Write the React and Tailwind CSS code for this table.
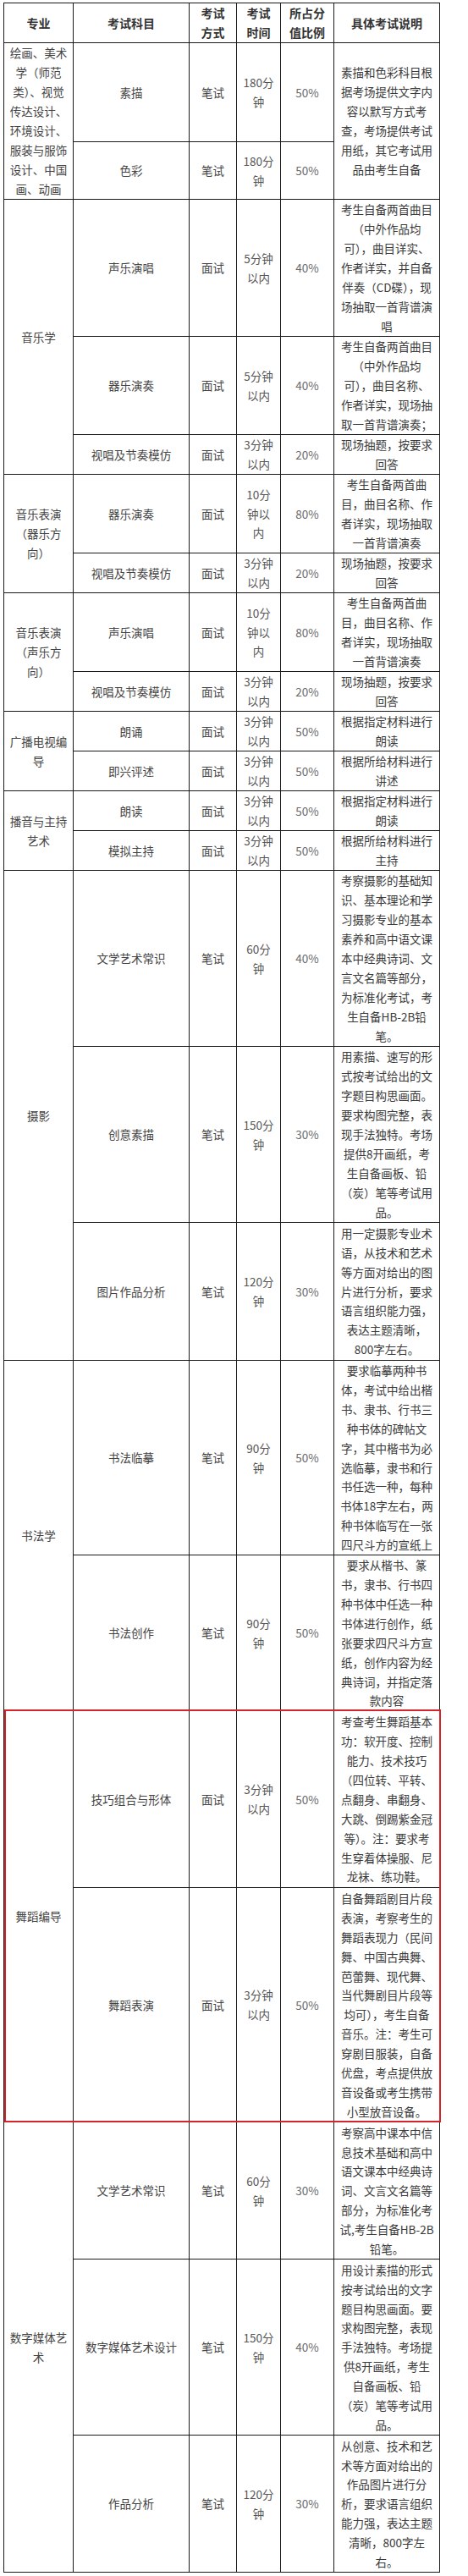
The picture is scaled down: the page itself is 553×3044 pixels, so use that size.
import React from "react";

const groups = [
  {
    major: ["绘画、美术", "学（师范", "类）、视觉", "传达设计、", "环境设计、", "服装与服饰", "设计、中国", "画、动画"],
    rows: [
      {
        h: "h-[117px]",
        subject: "素描",
        method: "笔试",
        time: ["180分", "钟"],
        pct: "50%",
        descSpan: 2,
        desc: ["素描和色彩科目根", "据考场提供文字内", "容以默写方式考", "查，考场提供考试", "用纸，其它考试用", "品由考生自备"],
      },
      { h: "h-[68px]", subject: "色彩", method: "笔试", time: ["180分", "钟"], pct: "50%" },
    ],
  },
  {
    major: ["音乐学"],
    rows: [
      {
        h: "h-[162px]",
        subject: "声乐演唱",
        method: "面试",
        time: ["5分钟", "以内"],
        pct: "40%",
        desc: ["考生自备两首曲目", "（中外作品均", "可），曲目详实、", "作者详实，并自备", "伴奏（CD碟），现", "场抽取一首背谱演", "唱"],
      },
      {
        h: "h-[116px]",
        subject: "器乐演奏",
        method: "面试",
        time: ["5分钟", "以内"],
        pct: "40%",
        desc: ["考生自备两首曲目", "（中外作品均", "可），曲目名称、", "作者详实，现场抽", "取一首背谱演奏；"],
      },
      {
        h: "h-[47px]",
        subject: "视唱及节奏模仿",
        method: "面试",
        time: ["3分钟", "以内"],
        pct: "20%",
        desc: ["现场抽题，按要求", "回答"],
      },
    ],
  },
  {
    major: ["音乐表演", "（器乐方", "向）"],
    rows: [
      {
        h: "h-[93px]",
        subject: "器乐演奏",
        method: "面试",
        time: ["10分", "钟以", "内"],
        pct: "80%",
        desc: ["考生自备两首曲", "目，曲目名称、作", "者详实，现场抽取", "一首背谱演奏"],
      },
      {
        h: "h-[47px]",
        subject: "视唱及节奏模仿",
        method: "面试",
        time: ["3分钟", "以内"],
        pct: "20%",
        desc: ["现场抽题，按要求", "回答"],
      },
    ],
  },
  {
    major: ["音乐表演", "（声乐方", "向）"],
    rows: [
      {
        h: "h-[93px]",
        subject: "声乐演唱",
        method: "面试",
        time: ["10分", "钟以", "内"],
        pct: "80%",
        desc: ["考生自备两首曲", "目，曲目名称、作", "者详实，现场抽取", "一首背谱演奏"],
      },
      {
        h: "h-[47px]",
        subject: "视唱及节奏模仿",
        method: "面试",
        time: ["3分钟", "以内"],
        pct: "20%",
        desc: ["现场抽题，按要求", "回答"],
      },
    ],
  },
  {
    major: ["广播电视编", "导"],
    rows: [
      { h: "h-[47px]", subject: "朗诵", method: "面试", time: ["3分钟", "以内"], pct: "50%", desc: ["根据指定材料进行", "朗读"] },
      { h: "h-[47px]", subject: "即兴评述", method: "面试", time: ["3分钟", "以内"], pct: "50%", desc: ["根据所给材料进行", "讲述"] },
    ],
  },
  {
    major: ["播音与主持", "艺术"],
    rows: [
      { h: "h-[47px]", subject: "朗读", method: "面试", time: ["3分钟", "以内"], pct: "50%", desc: ["根据指定材料进行", "朗读"] },
      { h: "h-[47px]", subject: "模拟主持", method: "面试", time: ["3分钟", "以内"], pct: "50%", desc: ["根据所给材料进行", "主持"] },
    ],
  },
  {
    major: ["摄影"],
    rows: [
      {
        h: "h-[208px]",
        subject: "文学艺术常识",
        method: "笔试",
        time: ["60分", "钟"],
        pct: "40%",
        desc: ["考察摄影的基础知", "识、基本理论和学", "习摄影专业的基本", "素养和高中语文课", "本中经典诗词、文", "言文名篇等部分，", "为标准化考试，考", "生自备HB-2B铅", "笔。"],
      },
      {
        h: "h-[208px]",
        subject: "创意素描",
        method: "笔试",
        time: ["150分", "钟"],
        pct: "30%",
        desc: ["用素描、速写的形", "式按考试给出的文", "字题目构思画面。", "要求构图完整，表", "现手法独特。考场", "提供8开画纸，考", "生自备画板、铅", "（炭）笔等考试用", "品。"],
      },
      {
        h: "h-[163px]",
        subject: "图片作品分析",
        method: "笔试",
        time: ["120分", "钟"],
        pct: "30%",
        desc: ["用一定摄影专业术", "语，从技术和艺术", "等方面对给出的图", "片进行分析，要求", "语言组织能力强，", "表达主题清晰，", "800字左右。"],
      },
    ],
  },
  {
    major: ["书法学"],
    rows: [
      {
        h: "h-[230px]",
        subject: "书法临摹",
        method: "笔试",
        time: ["90分", "钟"],
        pct: "50%",
        desc: ["要求临摹两种书", "体，考试中给出楷", "书、隶书、行书三", "种书体的碑帖文", "字，其中楷书为必", "选临摹，隶书和行", "书任选一种，每种", "书体18字左右，两", "种书体临写在一张", "四尺斗方的宣纸上"],
      },
      {
        h: "h-[184px]",
        subject: "书法创作",
        method: "笔试",
        time: ["90分", "钟"],
        pct: "50%",
        desc: ["要求从楷书、篆", "书，隶书、行书四", "种书体中任选一种", "书体进行创作，纸", "张要求四尺斗方宣", "纸，创作内容为经", "典诗词，并指定落", "款内容"],
      },
    ],
  },
  {
    major: ["舞蹈编导"],
    rows: [
      {
        h: "h-[209px]",
        subject: "技巧组合与形体",
        method: "面试",
        time: ["3分钟", "以内"],
        pct: "50%",
        desc: ["考查考生舞蹈基本", "功：软开度、控制", "能力、技术技巧", "（四位转、平转、", "点翻身、串翻身、", "大跳、倒踢紫金冠", "等）。注：要求考", "生穿着体操服、尼", "龙袜、练功鞋。"],
      },
      {
        h: "h-[277px]",
        subject: "舞蹈表演",
        method: "面试",
        time: ["3分钟", "以内"],
        pct: "50%",
        desc: ["自备舞蹈剧目片段", "表演，考察考生的", "舞蹈表现力（民间", "舞、中国古典舞、", "芭蕾舞、现代舞、", "当代舞剧目片段等", "均可），考生自备", "音乐。注：考生可", "穿剧目服装，自备", "优盘，考点提供放", "音设备或考生携带", "小型放音设备。"],
      },
    ],
  },
  {
    major: ["数字媒体艺", "术"],
    rows: [
      {
        h: "h-[162px]",
        subject: "文学艺术常识",
        method: "笔试",
        time: ["60分", "钟"],
        pct: "30%",
        desc: ["考察高中课本中信", "息技术基础和高中", "语文课本中经典诗", "词、文言文名篇等", "部分，为标准化考", "试,考生自备HB-2B", "铅笔。"],
      },
      {
        h: "h-[208px]",
        subject: "数字媒体艺术设计",
        method: "笔试",
        time: ["150分", "钟"],
        pct: "40%",
        desc: ["用设计素描的形式", "按考试给出的文字", "题目构思画面。要", "求构图完整，表现", "手法独特。考场提", "供8开画纸，考生", "自备画板、铅", "（炭）笔等考试用", "品。"],
      },
      {
        h: "h-[162px]",
        subject: "作品分析",
        method: "笔试",
        time: ["120分", "钟"],
        pct: "30%",
        desc: ["从创意、技术和艺", "术等方面对给出的", "作品图片进行分", "析，要求语言组织", "能力强，表达主题", "清晰，800字左", "右。"],
      },
    ],
  },
];

const cell = "border border-[#1a1a1a] p-0 text-center align-middle";

const Lines = ({ lines }) => (
  <>
    {lines.map((l, i) => (
      <div key={i} className="whitespace-nowrap">
        {l}
      </div>
    ))}
  </>
);

const App = () => {
  return (
    <div className="min-h-[3044px] w-[553px] bg-white pt-[3px] pl-[4px] font-['Noto_Sans_CJK_SC','Noto_Sans',sans-serif]">
      <div className="relative w-[515px]">
        <table className="w-[515px] table-fixed border-collapse text-[13.5px] leading-[22.9px] text-[#444]">
          <colgroup>
            <col className="w-[82px]" />
            <col className="w-[137px]" />
            <col className="w-[56px]" />
            <col className="w-[52px]" />
            <col className="w-[63px]" />
            <col className="w-[125px]" />
          </colgroup>
          <thead>
            <tr className="h-[47px] text-[14px] font-bold text-[#333]">
              <th className={cell}>专业</th>
              <th className={cell}>考试科目</th>
              <th className={cell}>
                <Lines lines={["考试", "方式"]} />
              </th>
              <th className={cell}>
                <Lines lines={["考试", "时间"]} />
              </th>
              <th className={cell}>
                <Lines lines={["所占分", "值比例"]} />
              </th>
              <th className={cell}>具体考试说明</th>
            </tr>
          </thead>
          <tbody>
            {groups.map((g, gi) =>
              g.rows.map((r, ri) => (
                <tr key={`${gi}-${ri}`} className={r.h}>
                  {ri === 0 && (
                    <td rowSpan={g.rows.length} className={cell}>
                      <Lines lines={g.major} />
                    </td>
                  )}
                  <td className={cell}>{r.subject}</td>
                  <td className={cell}>{r.method}</td>
                  <td className={`${cell} text-[#555]`}>
                    <Lines lines={r.time} />
                  </td>
                  <td className={`${cell} text-[#6b6b6b]`}>{r.pct}</td>
                  {r.desc && (
                    <td rowSpan={r.descSpan || 1} className={`${cell} text-[#3a3a3a]`}>
                      <Lines lines={r.desc} />
                    </td>
                  )}
                </tr>
              ))
            )}
          </tbody>
        </table>
        {/* red highlight round the 舞蹈编导 rows */}
        <div className="pointer-events-none absolute left-[1px] top-[2017px] h-[488px] w-[516px] border-2 border-[#d6232c]" />
      </div>
    </div>
  );
};

export default App;
